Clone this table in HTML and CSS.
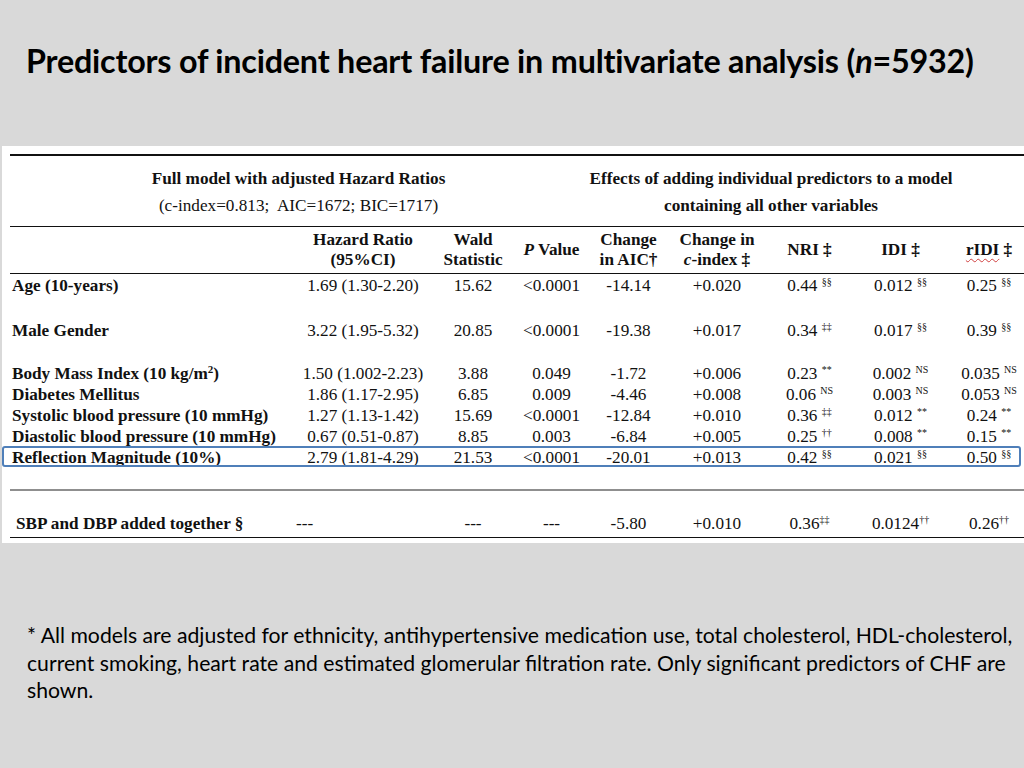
FILE: index.html
```html
<!DOCTYPE html>
<html>
<head>
<meta charset="utf-8">
<link rel="stylesheet" href="styles.css">
</head>
<body>
<h1 class="title">Predictors of incident heart failure in multivariate analysis (<i>n</i>=5932)</h1>
<div class="panel">
  <table class="tbl">
    <colgroup>
      <col class="c-label"><col class="c-hr"><col class="c-wald"><col class="c-p"><col class="c-aic"><col class="c-ci"><col class="c-nri"><col class="c-idi"><col class="c-ridi">
    </colgroup>
    <thead>
      <tr class="group">
        <th colspan="4">Full model with adjusted Hazard Ratios<br><span class="reg">(c-index=0.813;&nbsp; AIC=1672; BIC=1717)</span></th>
        <th colspan="5" class="effects">Effects of adding individual predictors to a model<br>containing all other variables</th>
      </tr>
      <tr class="cols">
        <th></th>
        <th>Hazard Ratio<br>(95%CI)</th>
        <th>Wald<br>Statistic</th>
        <th><i>P</i> Value</th>
        <th>Change<br>in AIC†</th>
        <th>Change in<br><i>c</i>-index ‡</th>
        <th>NRI ‡</th>
        <th>IDI ‡</th>
        <th><span class="squig">rIDI</span> ‡</th>
      </tr>
    </thead>
    <tbody>
      <tr class="tall">
        <td class="lbl">Age (10-years)</td><td>1.69 (1.30-2.20)</td><td>15.62</td><td>&lt;0.0001</td><td>-14.14</td><td>+0.020</td><td>0.44 <sup>§§</sup></td><td>0.012 <sup>§§</sup></td><td>0.25 <sup>§§</sup></td>
      </tr>
      <tr class="tall2">
        <td class="lbl">Male Gender</td><td>3.22 (1.95-5.32)</td><td>20.85</td><td>&lt;0.0001</td><td>-19.38</td><td>+0.017</td><td>0.34 <sup>‡‡</sup></td><td>0.017 <sup>§§</sup></td><td>0.39 <sup>§§</sup></td>
      </tr>
      <tr>
        <td class="lbl">Body Mass Index (10 kg/m<sup class="sq">2</sup>)</td><td>1.50 (1.002-2.23)</td><td>3.88</td><td>0.049</td><td>-1.72</td><td>+0.006</td><td>0.23 <sup>**</sup></td><td>0.002 <sup>NS</sup></td><td>0.035 <sup>NS</sup></td>
      </tr>
      <tr>
        <td class="lbl">Diabetes Mellitus</td><td>1.86 (1.17-2.95)</td><td>6.85</td><td>0.009</td><td>-4.46</td><td>+0.008</td><td>0.06 <sup>NS</sup></td><td>0.003 <sup>NS</sup></td><td>0.053 <sup>NS</sup></td>
      </tr>
      <tr>
        <td class="lbl">Systolic blood pressure (10 mmHg)</td><td>1.27 (1.13-1.42)</td><td>15.69</td><td>&lt;0.0001</td><td>-12.84</td><td>+0.010</td><td>0.36 <sup>‡‡</sup></td><td>0.012 <sup>**</sup></td><td>0.24 <sup>**</sup></td>
      </tr>
      <tr>
        <td class="lbl">Diastolic blood pressure (10 mmHg)</td><td>0.67 (0.51-0.87)</td><td>8.85</td><td>0.003</td><td>-6.84</td><td>+0.005</td><td>0.25 <sup>††</sup></td><td>0.008 <sup>**</sup></td><td>0.15 <sup>**</sup></td>
      </tr>
      <tr class="hl-row">
        <td class="lbl"><span class="hl"></span>Reflection Magnitude (10%)</td><td>2.79 (1.81-4.29)</td><td>21.53</td><td>&lt;0.0001</td><td>-20.01</td><td>+0.013</td><td>0.42 <sup>§§</sup></td><td>0.021 <sup>§§</sup></td><td>0.50 <sup>§§</sup></td>
      </tr>
      <tr class="sep">
        <td colspan="9"></td>
      </tr>
      <tr class="sum">
        <td class="lbl">SBP and DBP added together §</td><td class="left">---</td><td>---</td><td>---</td><td>-5.80</td><td>+0.010</td><td>0.36<sup>‡‡</sup></td><td>0.0124<sup>††</sup></td><td>0.26<sup>††</sup></td>
      </tr>
    </tbody>
  </table>
</div>
<p class="note">* All models are adjusted for ethnicity, antihypertensive medication use, total cholesterol, HDL-cholesterol,<br>current smoking, heart rate and estimated glomerular filtration rate. Only significant predictors of CHF are<br>shown.</p>
</body>
</html>
```

FILE: styles.css
```css
html, body {
  margin: 0;
  padding: 0;
}
body {
  background: #d9d9d9;
  width: 1024px;
  height: 768px;
  overflow: hidden;
  color: #000;
}
.title {
  margin: 0;
  padding: 42px 0 0 26px;
  height: 146px;
  box-sizing: border-box;
  font-family: Lato, "Open Sans", sans-serif;
  font-weight: 700;
  font-size: 32.3px;
  line-height: 38px;
  letter-spacing: -0.2px;
  white-space: nowrap;
}
.title i {
  font-style: italic;
}
.panel {
  margin-left: 2px;
  background: #fff;
  padding: 8px 0 5px 8px;
  width: 1030px;
  box-sizing: border-box;
}
.tbl {
  border-collapse: collapse;
  table-layout: fixed;
  width: 1022px;
  font-family: "Liberation Serif", "Times New Roman", serif;
  font-size: 17.2px;
  color: #111;
}
.c-label { width: 286px; }
.c-hr { width: 134px; }
.c-wald { width: 86px; }
.c-p { width: 71px; }
.c-aic { width: 83px; }
.c-ci { width: 94px; }
.c-nri { width: 91px; }
.c-idi { width: 91px; }
.c-ridi { width: 86px; }

.tbl th, .tbl td {
  padding: 0;
  text-align: center;
  white-space: nowrap;
}
.group th {
  border-top: 2px solid #111;
  border-bottom: 1px solid #111;
  font-weight: 700;
  line-height: 27px;
  height: 69px;
  padding-top: 1px;
  vertical-align: middle;
}
.group th .reg {
  font-weight: 400;
}
.group th.effects {
  padding-right: 77px;
}
.cols th {
  border-bottom: 1px solid #111;
  font-weight: 700;
  line-height: 20px;
  height: 46px;
  vertical-align: middle;
}
.squig {
  text-decoration: underline wavy #d04040;
  text-decoration-thickness: 1px;
  text-underline-offset: 3px;
}
.tbl td {
  height: 21px;
  line-height: 21px;
  vertical-align: top;
}
.tbl td.lbl {
  text-align: left;
  padding-left: 2px;
  font-weight: 700;
}
.tall td {
  height: 45px;
  padding-top: 1px;
}
.tall2 td {
  height: 43px;
}
.tbl sup {
  font-size: 10px;
  line-height: 0;
  vertical-align: 6px;
}
.tbl sup.sq {
  font-size: 11px;
}
.hl-row td.lbl {
  position: relative;
}
.hl {
  position: absolute;
  left: -8px;
  top: -1px;
  width: 1019px;
  height: 21px;
  box-sizing: border-box;
  border: 2px solid #4f7fb9;
  border-radius: 3px;
}
.sep td {
  height: 21px;
  border-bottom: 2px solid #8f8f8f;
}
.sum td {
  height: 43px;
  vertical-align: bottom;
  padding-bottom: 3px;
  border-bottom: 1px solid #111;
}
.sum td.lbl {
  padding-left: 6px;
}
.sum td.left {
  text-align: left;
}
.note {
  margin: 0;
  padding: 79px 0 0 27px;
  font-family: Lato, "Open Sans", sans-serif;
  font-size: 21.2px;
  line-height: 27.5px;
  color: #000;
  white-space: nowrap;
}
```
